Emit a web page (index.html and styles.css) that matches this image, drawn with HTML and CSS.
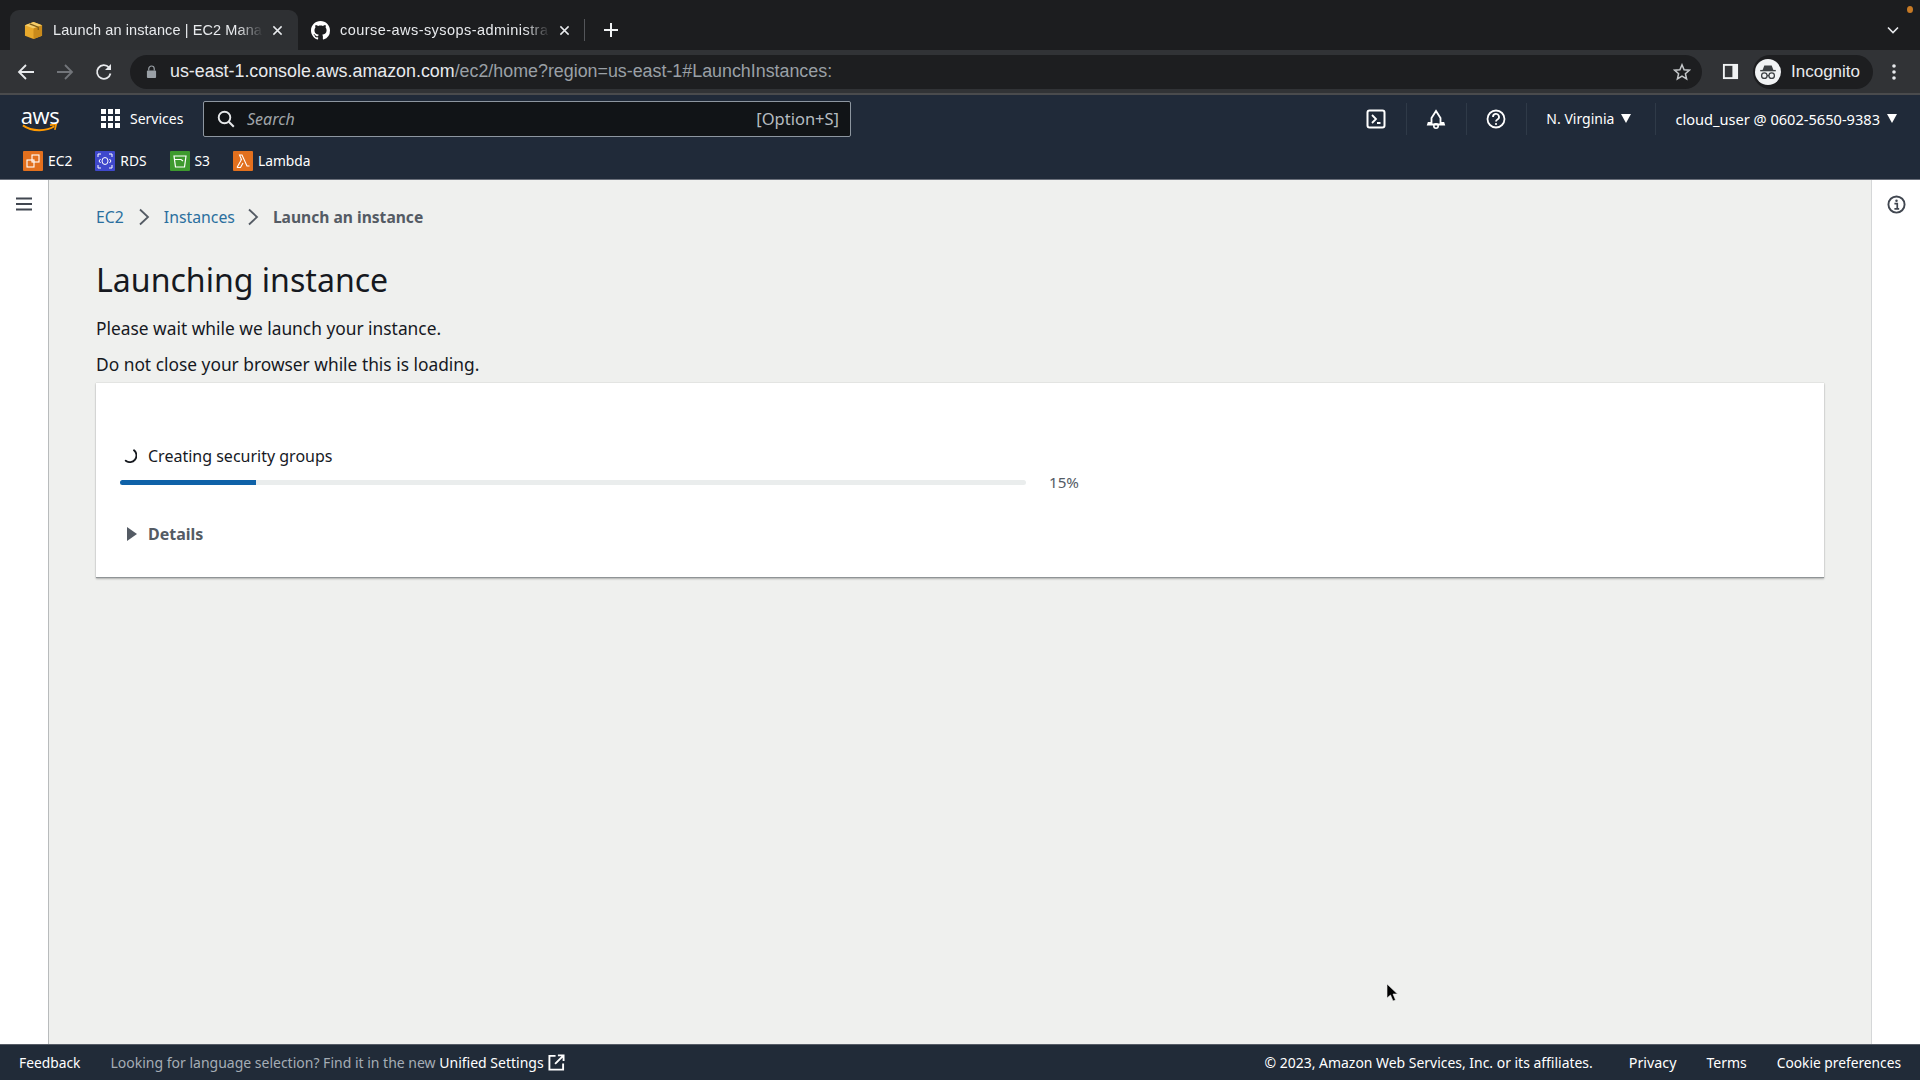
FILE: index.html
```html
<!DOCTYPE html>
<html lang="en">
<head>
<meta charset="utf-8">
<title>Launch an instance | EC2 Management Console</title>
<link rel="stylesheet" href="styles.css">
</head>
<body>
<header class="tabstrip">
  <div class="tab tab-active">
    <svg class="favicon" viewBox="0 0 20 20"><path d="M10 1l9 3.500v11L10 19 1 15.500v-11z" fill="#e8a92c"/><path d="M10 8L1 4.500 10 1l9 3.500z" fill="#f5cd6a"/><path d="M10 8v11l9-3.500v-11z" fill="#c98a1b"/><path d="M6 3l9 3.500v3" fill="none" stroke="#7a5a18" stroke-width="1.200"/></svg>
    <span class="tab-title">Launch an instance | EC2 Mana</span>
    <svg class="tab-close" viewBox="0 0 12 12"><path d="M1.500 1.500l9 9M10.500 1.500l-9 9" stroke="#e8eaed" stroke-width="1.600"/></svg>
  </div>
  <div class="tab tab-second">
    <svg class="favicon" viewBox="0 0 16 16"><path fill="#fff" d="M8 0C3.580 0 0 3.580 0 8c0 3.540 2.290 6.530 5.470 7.590.4.070.55-.17.55-.38 0-.19-.01-.82-.01-1.490-2.010.37-2.530-.49-2.690-.94-.09-.23-.48-.94-.82-1.130-.28-.15-.68-.52-.01-.53.63-.01 1.080.58 1.230.82.72 1.210 1.870.87 2.330.66.07-.52.28-.87.51-1.070-1.780-.2-3.640-.89-3.640-3.950 0-.87.31-1.590.82-2.150-.08-.2-.36-1.020.08-2.120 0 0 .67-.21 2.200.82.64-.18 1.320-.27 2-.27.68 0 1.360.09 2 .27 1.530-1.040 2.200-.82 2.200-.82.44 1.100.16 1.920.08 2.120.51.56.82 1.270.82 2.150 0 3.070-1.870 3.750-3.650 3.950.29.25.54.73.54 1.480 0 1.070-.01 1.930-.01 2.200 0 .21.15.46.55.38A8.013 8.013 0 0016 8c0-4.420-3.580-8-8-8z"/></svg>
    <span class="tab-title">course-aws-sysops-administra</span>
    <svg class="tab-close" viewBox="0 0 12 12"><path d="M1.500 1.500l9 9M10.500 1.500l-9 9" stroke="#e8eaed" stroke-width="1.600"/></svg>
  </div>
  <span class="tab-sep"></span>
  <svg class="tab-new" viewBox="0 0 16 16"><path d="M8 1v14M1 8h14" stroke="#f1f3f4" stroke-width="2"/></svg>
  <span class="grow"></span>
  <svg class="tab-list" viewBox="0 0 12 8"><path d="M1 1.500l5 5 5-5" fill="none" stroke="#e8eaed" stroke-width="1.600"/></svg>
  <span class="rec-dot"></span>
</header>

<div class="toolbar">
  <svg class="tool-icon" viewBox="0 0 18 18"><path d="M17 9H2.500M9 2L2 9l7 7" fill="none" stroke="#e8eaed" stroke-width="1.800"/></svg>
  <svg class="tool-icon" viewBox="0 0 18 18"><path d="M1 9h14.500M9 2l7 7-7 7" fill="none" stroke="#72757a" stroke-width="1.800"/></svg>
  <svg class="tool-icon" viewBox="0 0 18 18"><path d="M15.500 10.500A6.800 6.800 0 1 1 14 4.500" fill="none" stroke="#e8eaed" stroke-width="1.800"/><path d="M16 1v6h-6z" fill="#e8eaed"/></svg>
  <div class="omnibox">
    <svg class="lock" viewBox="0 0 12 14"><path d="M3 6V4a3 3 0 0 1 6 0v2" fill="none" stroke="#9aa0a6" stroke-width="1.300"/><rect x="1" y="6" width="10" height="8" rx="1" fill="#9aa0a6"/></svg>
    <span class="url"><span class="url-host">us-east-1.console.aws.amazon.com</span>/ec2/home?region=us-east-1#LaunchInstances:</span>
    <span class="grow"></span>
    <svg class="star" viewBox="0 0 18 18"><path d="M9 1.800l2.100 4.900 5.300.45-4 3.500 1.200 5.200L9 13.100l-4.600 2.750 1.200-5.200-4-3.500 5.300-.45z" fill="none" stroke="#c4c7c9" stroke-width="1.500"/></svg>
  </div>
  <svg class="panel-icon" viewBox="0 0 18 18"><rect x="1" y="1" width="16" height="16" fill="#f1f3f4"/><rect x="3" y="3" width="8" height="12" fill="#35373a"/></svg>
  <div class="profile">
    <span class="avatar"><svg viewBox="0 0 24 24"><path d="M6 10l2-5h8l2 5z" fill="#3c4043"/><path d="M3.500 10.500h17" stroke="#3c4043" stroke-width="1.500"/><circle cx="8" cy="16" r="3" fill="none" stroke="#3c4043" stroke-width="1.400"/><circle cx="16" cy="16" r="3" fill="none" stroke="#3c4043" stroke-width="1.400"/><path d="M11 16h2" stroke="#3c4043" stroke-width="1.200"/></svg></span>
    <span class="profile-name">Incognito</span>
  </div>
  <svg class="kebab" viewBox="0 0 4 18"><circle cx="2" cy="3" r="1.800" fill="#e8eaed"/><circle cx="2" cy="9" r="1.800" fill="#e8eaed"/><circle cx="2" cy="15" r="1.800" fill="#e8eaed"/></svg>
</div>

<nav class="awsnav">
  <div class="nav-top">
    <div class="logo"><span class="logo-text">aws</span><svg class="logo-smile" viewBox="0 0 40 10"><path d="M1 1.500c10 7 26 7 35 1" fill="none" stroke="#f90" stroke-width="2.200"/><path d="M31 1.200l7-.7-1.500 6" fill="none" stroke="#f90" stroke-width="1.800"/></svg></div>
    <div class="services">
      <svg class="grid-icon" viewBox="0 0 19 19"><g fill="#fff"><rect width="5" height="5"/><rect x="7" width="5" height="5"/><rect x="14" width="5" height="5"/><rect y="7" width="5" height="5"/><rect x="7" y="7" width="5" height="5"/><rect x="14" y="7" width="5" height="5"/><rect y="14" width="5" height="5"/><rect x="7" y="14" width="5" height="5"/><rect x="14" y="14" width="5" height="5"/></g></svg>
      <span>Services</span>
    </div>
    <div class="searchbox">
      <svg class="search-icon" viewBox="0 0 18 18"><circle cx="7.500" cy="7.500" r="5.800" fill="none" stroke="#e6e8ea" stroke-width="1.900"/><path d="M11.800 11.800l5 5" stroke="#e6e8ea" stroke-width="2"/></svg>
      <span class="search-ph">Search</span>
      <span class="grow"></span>
      <span class="search-key">[Option+S]</span>
    </div>
    <span class="grow"></span>
    <div class="nav-icon"><svg viewBox="0 0 20 20"><rect x="1.500" y="1.500" width="17" height="17" rx="2" fill="none" stroke="#fff" stroke-width="2"/><path d="M6 6l4 4-4 4M11 14h3.500" fill="none" stroke="#fff" stroke-width="1.800"/></svg></div>
    <div class="nav-icon nav-div"><svg viewBox="0 0 20 20"><path d="M10 2L5.500 9v5H2.500l-.5 1.500h16l-.5-1.500h-3V9z" fill="none" stroke="#fff" stroke-width="1.800"/><circle cx="10" cy="17" r="2.200" fill="none" stroke="#fff" stroke-width="1.600"/></svg></div>
    <div class="nav-icon nav-div"><svg viewBox="0 0 20 20"><circle cx="10" cy="10" r="8.500" fill="none" stroke="#fff" stroke-width="1.800"/><path d="M7 8a3 3 0 1 1 4.500 2.500c-1 .6-1.500 1-1.500 2" fill="none" stroke="#fff" stroke-width="1.800"/><circle cx="10" cy="15" r="1.100" fill="#fff"/></svg></div>
    <div class="nav-menu nav-div region"><span>N. Virginia</span><span class="caret"></span></div>
    <div class="nav-menu nav-div account"><span>cloud_user @ 0602-5650-9383</span><span class="caret"></span></div>
  </div>
  <div class="nav-fav">
    <div class="fav fav-ec2">
      <svg class="fav-icon" viewBox="0 0 20 20"><rect width="20" height="20" rx="1" fill="#e2701e"/><g fill="none" stroke="#fff" stroke-width="1.100"><rect x="9" y="4" width="7" height="7"/><rect x="4" y="9" width="7" height="7"/></g></svg>
      <span>EC2</span>
    </div>
    <div class="fav fav-rds">
      <svg class="fav-icon" viewBox="0 0 20 20"><rect width="20" height="20" rx="1" fill="#3f48cc"/><g fill="none" stroke="#fff" stroke-width="1"><ellipse cx="10" cy="10" rx="3" ry="3.500"/><path d="M3 6V3h3M17 6V3h-3M3 14v3h3M17 14v3h-3M5.500 8L4 10l1.500 2M14.500 8L16 10l-1.500 2"/></g></svg>
      <span>RDS</span>
    </div>
    <div class="fav fav-s3">
      <svg class="fav-icon" viewBox="0 0 20 20"><rect width="20" height="20" rx="1" fill="#3d9a2e"/><g fill="none" stroke="#fff" stroke-width="1.200"><path d="M4 5h12l-1.500 11h-9z"/><path d="M4 8.500h7l2 1.500"/></g></svg>
      <span>S3</span>
    </div>
    <div class="fav fav-lambda">
      <svg class="fav-icon" viewBox="0 0 20 20"><rect width="20" height="20" rx="1" fill="#e2701e"/><path d="M4 16.500l4.500-8L6.500 4H9l5 11h2.500M8.500 8.500l-1 0M10 12l-2.500 4.500H4" fill="none" stroke="#fff" stroke-width="1.100"/></svg>
      <span>Lambda</span>
    </div>
  </div>
</nav>

<div class="workspace">
  <aside class="rail rail-left">
    <svg class="menu-icon" viewBox="0 0 16 14"><path d="M0 1.500h16M0 7h16M0 12.500h16" stroke="#414750" stroke-width="2.200"/></svg>
  </aside>
  <main class="content">
    <ol class="crumbs">
      <li class="crumb-link">EC2</li>
      <li class="crumb-sep"><svg viewBox="0 0 12 18"><path d="M2 1.500L10 9l-8 7.500" fill="none" stroke="#545b64" stroke-width="1.800"/></svg></li>
      <li class="crumb-link">Instances</li>
      <li class="crumb-sep crumb-sep-last"><svg viewBox="0 0 12 18"><path d="M2 1.500L10 9l-8 7.500" fill="none" stroke="#545b64" stroke-width="1.800"/></svg></li>
      <li class="crumb-current">Launch an instance</li>
    </ol>
    <h1 class="title">Launching instance</h1>
    <p class="lead">Please wait while we launch your instance.</p>
    <p class="lead lead-second">Do not close your browser while this is loading.</p>
    <section class="card">
      <div class="status">
        <svg class="spinner" viewBox="0 0 16 16"><path d="M12.800 2.500A6.500 6.500 0 0 1 4 13.500" fill="none" stroke="#16191f" stroke-width="2" stroke-linecap="round"/></svg>
        <span>Creating security groups</span>
      </div>
      <div class="progress">
        <div class="track"><div class="fill"></div></div>
        <span class="pct">15%</span>
      </div>
      <div class="details">
        <svg class="details-arrow" viewBox="0 0 10 14"><path d="M0 0l10 7-10 7z" fill="#545b64"/></svg>
        <span>Details</span>
      </div>
    </section>
  </main>
  <aside class="rail rail-right">
    <svg class="info-icon" viewBox="0 0 20 20"><circle cx="10" cy="10" r="8.500" fill="none" stroke="#414750" stroke-width="2"/><circle cx="10" cy="6" r="1.300" fill="#414750"/><path d="M7.800 9h3v5.500M7.800 14.700h5" fill="none" stroke="#414750" stroke-width="1.800"/></svg>
  </aside>
</div>

<footer class="footer">
  <span class="foot-feedback">Feedback</span>
  <span class="foot-notice">Looking for language selection? Find it in the new <span class="foot-strong">Unified Settings</span></span>
  <svg class="foot-ext" viewBox="0 0 18 18"><path d="M8 2H1.500v14.500H16V10" fill="none" stroke="#fff" stroke-width="2"/><path d="M10.500 1.500h6v6M16 2L7.500 10.500" fill="none" stroke="#fff" stroke-width="2"/></svg>
  <span class="grow"></span>
  <span class="foot-copy">© 2023, Amazon Web Services, Inc. or its affiliates.</span>
  <span class="foot-link foot-privacy">Privacy</span>
  <span class="foot-link">Terms</span>
  <span class="foot-link foot-cookie">Cookie preferences</span>
</footer>

<svg class="cursor" viewBox="0 0 12 20"><path d="M1 1v14l3.500-3 2.500 6 2.500-1-2.500-6h4.500z" fill="#000" stroke="#eee" stroke-width=".6"/></svg>
</body>
</html>
```

FILE: styles.css
```css
* { box-sizing: border-box; }
html, body { margin: 0; height: 100%; }
body {
  height: 1080px;
  overflow: hidden;
  display: flex;
  flex-direction: column;
  font-family: "Noto Sans", "Open Sans", sans-serif;
  background: #eff0ee;
  color: #16191f;
  position: relative;
}
.grow { flex: 1 1 auto; }

/* Browser tabs */
.tabstrip {
  height: 50px;
  flex: none;
  display: flex;
  align-items: flex-end;
  padding-left: 10px;
  background: #1c1d1f;
  position: relative;
  font-family: "Liberation Sans", Arial, sans-serif;
}
.tab {
  width: 288px;
  height: 40px;
  flex: none;
  display: flex;
  align-items: center;
  padding-left: 14px;
  border-radius: 9px 9px 0 0;
  color: #e8eaed;
  font-size: 14.500px;
}
.tab-active { background: #2e3033; }
.tab-second { padding-left: 13px; }
.favicon { width: 19px; height: 19px; flex: none; }
.tab-title {
  width: 210px;
  margin-left: 10px;
  white-space: nowrap;
  letter-spacing: .1px;
  -webkit-mask-image: linear-gradient(to right, #000 88%, transparent 100%);
  mask-image: linear-gradient(to right, #000 88%, transparent 100%);
}
.tab-second .tab-title { letter-spacing: .45px; }
.tab-close { width: 11px; height: 11px; margin-left: 9px; flex: none; }
.tab-sep { width: 1px; height: 22px; background: #54565a; margin: 0 0 9px -2px; flex: none; }
.tab-new { width: 16px; height: 16px; margin: 0 0 12px 18px; flex: none; }
.tab-list { width: 12px; height: 8px; margin: 0 21px 16px 0; flex: none; }
.rec-dot {
  position: absolute;
  top: 6px;
  right: 7px;
  width: 6px;
  height: 7px;
  border-radius: 50%;
  background: #c77a25;
}

/* Browser toolbar */
.toolbar {
  height: 45px;
  flex: none;
  display: flex;
  align-items: center;
  padding: 0 0 0 17px;
  background: #313336;
  border-bottom: 2px solid #4a4b4d;
  gap: 21px;
  font-family: "Liberation Sans", Arial, sans-serif;
}
.tool-icon { width: 18px; height: 18px; flex: none; }
.omnibox {
  width: 1572px;
  margin-left: -4px;
  height: 34px;
  flex: none;
  display: flex;
  align-items: center;
  padding: 0 11px 0 16px;
  background: #1d1e20;
  border-radius: 17px;
}
.lock { width: 11px; height: 13px; flex: none; }
.url { margin-left: 13px; font-size: 17.850px; color: #9aa0a6; white-space: nowrap; }
.url-host { color: #e8eaed; }
.star { width: 18px; height: 18px; flex: none; }
.panel-icon { width: 17px; height: 17px; margin-left: -1px; flex: none; }
.profile {
  display: flex;
  align-items: center;
  height: 34px;
  width: 120px;
  margin-left: -7px;
  flex: none;
  padding-left: 2px;
  border-radius: 17px;
  background: #1d1e20;
}
.avatar {
  width: 26px;
  height: 26px;
  border-radius: 50%;
  background: #f1f3f4;
  display: flex;
  align-items: center;
  justify-content: center;
  flex: none;
}
.avatar svg { width: 22px; height: 22px; }
.profile-name { margin-left: 10px; font-size: 17px; color: #e8eaed; }
.kebab { width: 4px; height: 18px; margin-left: -2px; flex: none; }

/* AWS console nav */
.awsnav {
  height: 85px;
  flex: none;
  background: #202a39;
  border-bottom: 1px solid #6a6f7a;
  color: #fff;
  font-size: 14px;
}
.nav-top {
  height: 47px;
  display: flex;
  align-items: center;
  padding: 0 23px 0 20px;
}
.logo { width: 40px; height: 26px; flex: none; position: relative; text-align: center; }
.logo-text {
  display: block;
  font-size: 22px;
  line-height: 18px;
  font-family: "Open Sans", sans-serif;
  letter-spacing: -.5px;
}
.logo-smile { display: block; width: 40px; height: 9px; }
.services {
  display: flex;
  align-items: center;
  gap: 10px;
  margin-left: 41px;
  width: 102px;
  flex: none;
}
.grid-icon { width: 19px; height: 19px; flex: none; }
.searchbox {
  width: 648px;
  height: 36px;
  flex: none;
  display: flex;
  align-items: center;
  padding: 0 11px 0 13px;
  background: #111417;
  border: 1px solid #8d96a0;
  border-radius: 2px;
}
.search-icon { width: 18px; height: 18px; flex: none; }
.search-ph { margin-left: 12px; font-size: 16px; font-style: italic; color: #a0a5a9; }
.search-key { font-size: 16.500px; color: #b6bcc0; }
.nav-icon {
  width: 20px;
  height: 20px;
  flex: none;
  position: relative;
  margin-right: 40px;
}
.nav-icon svg { display: block; width: 20px; height: 20px; }
.nav-div::before {
  content: "";
  position: absolute;
  left: -20px;
  top: -6px;
  height: 32px;
  width: 1px;
  background: #2f3a48;
}
.nav-menu { display: flex; align-items: center; gap: 7px; position: relative; flex: none; }
.region { margin-right: 44px; }
.account { font-size: 14.600px; }
.nav-menu.region::before { left: -20px; }
.caret {
  width: 0;
  height: 0;
  border-left: 5.500px solid transparent;
  border-right: 5.500px solid transparent;
  border-top: 9px solid #fff;
}
.nav-fav {
  height: 37px;
  display: flex;
  align-items: center;
  padding-left: 23px;
  gap: 23px;
  font-size: 13.800px;
}
.fav { display: flex; align-items: center; gap: 5px; }
.fav-icon { width: 20px; height: 20px; flex: none; }

/* Page */
.workspace { flex: 1 1 auto; display: flex; min-height: 0; }
.rail {
  flex: none;
  background: #fff;
  display: flex;
  justify-content: center;
  align-items: flex-start;
  padding-top: 17px;
}
.rail-left { width: 49px; border-right: 1px solid #b8bbbc; padding-right: 1px; }
.rail-right { width: 49px; border-left: 1px solid #d5d7d8; padding-top: 15px; }
.menu-icon { width: 16px; height: 14px; }
.info-icon { width: 19px; height: 19px; }
.content { flex: 1 1 auto; padding: 0 47px 0 47px; min-width: 0; }
.crumbs {
  list-style: none;
  margin: 0;
  padding: 25px 0 0;
  display: flex;
  align-items: center;
  gap: 14px;
  height: 49px;
  font-size: 15.800px;
  line-height: 24px;
}
.crumb-link { color: #2a6f9e; }
.crumb-current { color: #545b64; font-weight: 700; font-size: 15.600px; }
.crumb-sep { display: flex; }
.crumb-sep-last { margin-left: -2px; }
.crumb-sep svg { width: 12px; height: 18px; }
.title {
  margin: 27.500px 0 0;
  font-size: 32.100px;
  line-height: 46px;
  font-weight: 400;
  color: #16191f;
}
.lead { margin: 13.500px 0 0; font-size: 17.350px; line-height: 24px; }
.lead-second { margin-top: 11.500px; }
.card {
  margin-top: 7px;
  height: 195px;
  background: #fff;
  border-bottom: 1px solid #8f9496;
  box-shadow: 0 1px 2px rgba(0,0,0,.25), 0 0 1px rgba(0,0,0,.2);
  padding: 61px 24px 0;
}
.status {
  display: flex;
  align-items: center;
  gap: 11px;
  height: 24px;
  padding-left: 2px;
  font-size: 16px;
}
.spinner { width: 15px; height: 15px; flex: none; }
.progress { display: flex; align-items: center; margin-top: 8.500px; height: 12px; }
.track { width: 906px; height: 5px; background: #eaeded; border-radius: 3px; overflow: hidden; flex: none; }
.fill { width: 15%; height: 100%; background: #0f62a8; }
.pct { margin-left: 23px; font-size: 15.200px; color: #545b64; }
.details {
  display: flex;
  align-items: center;
  gap: 11px;
  margin-top: 34px;
  height: 24px;
  padding-left: 7px;
  font-size: 16px;
  font-weight: 700;
  color: #545b64;
}
.details-arrow { width: 10px; height: 14px; flex: none; }

/* Footer */
.footer {
  height: 36px;
  flex: none;
  display: flex;
  align-items: center;
  padding: 0 19px;
  background: #212b38;
  border-top: 1px solid #565c66;
  color: #fff;
  font-size: 14px;
}
.foot-feedback { margin-right: 30px; font-size: 13.800px; }
.foot-notice { color: #a5adb5; }
.foot-strong { color: #fff; }
.foot-ext { width: 17px; height: 17px; margin-left: 4px; flex: none; }
.foot-copy { margin-right: 36px; font-size: 13.950px; }
.foot-link { margin-right: 30px; }
.foot-privacy { font-size: 14.300px; }
.foot-cookie { margin-right: 0; font-size: 13.750px; }

.cursor {
  position: absolute;
  left: 1386px;
  top: 983px;
  width: 12px;
  height: 20px;
}
```
